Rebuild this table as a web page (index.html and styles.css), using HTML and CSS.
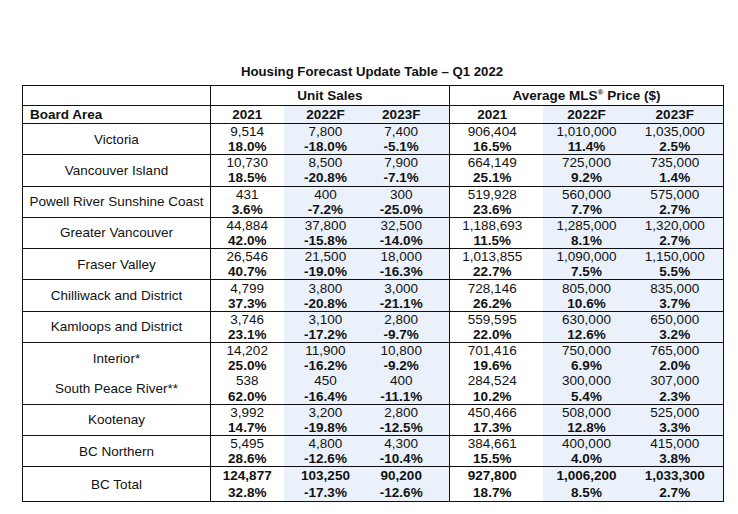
FILE: index.html
```html
<!DOCTYPE html>
<html lang="en">
<head>
<meta charset="utf-8">
<title>Housing Forecast Update Table – Q1 2022</title>
<link rel="stylesheet" href="styles.css">
</head>
<body>
<div class="page">
  <h1 class="title">Housing Forecast Update Table – Q1 2022</h1>
  <table class="forecast">
    <colgroup>
      <col class="c-area"><col class="c-u1"><col class="c-u2"><col class="c-u3"><col class="c-p1"><col class="c-p2"><col class="c-p3">
    </colgroup>
    <thead>
      <tr class="group-row">
        <th class="area-cell"></th>
        <th colspan="3" class="sep">Unit Sales</th>
        <th colspan="3">Average MLS<sup>®</sup> Price ($)</th>
      </tr>
      <tr class="year-row">
        <th class="area-cell area-head">Board Area</th>
        <th class="u1">2021</th>
        <th class="u2 shade">2022F</th>
        <th class="u3 shade sep">2023F</th>
        <th class="p1">2021</th>
        <th class="p2 shade">2022F</th>
        <th class="p3 shade">2023F</th>
      </tr>
    </thead>
    <tbody>
      <tr>
        <td class="area-cell">Victoria</td>
        <td class="u1"><span class="n">9,514</span><b>18.0%</b></td>
        <td class="u2 shade"><span class="n">7,800</span><b>-18.0%</b></td>
        <td class="u3 shade sep"><span class="n">7,400</span><b>-5.1%</b></td>
        <td class="p1"><span class="n">906,404</span><b>16.5%</b></td>
        <td class="p2 shade"><span class="n">1,010,000</span><b>11.4%</b></td>
        <td class="p3 shade"><span class="n">1,035,000</span><b>2.5%</b></td>
      </tr>
      <tr>
        <td class="area-cell">Vancouver Island</td>
        <td class="u1"><span class="n">10,730</span><b>18.5%</b></td>
        <td class="u2 shade"><span class="n">8,500</span><b>-20.8%</b></td>
        <td class="u3 shade sep"><span class="n">7,900</span><b>-7.1%</b></td>
        <td class="p1"><span class="n">664,149</span><b>25.1%</b></td>
        <td class="p2 shade"><span class="n">725,000</span><b>9.2%</b></td>
        <td class="p3 shade"><span class="n">735,000</span><b>1.4%</b></td>
      </tr>
      <tr>
        <td class="area-cell">Powell River Sunshine Coast</td>
        <td class="u1"><span class="n">431</span><b>3.6%</b></td>
        <td class="u2 shade"><span class="n">400</span><b>-7.2%</b></td>
        <td class="u3 shade sep"><span class="n">300</span><b>-25.0%</b></td>
        <td class="p1"><span class="n">519,928</span><b>23.6%</b></td>
        <td class="p2 shade"><span class="n">560,000</span><b>7.7%</b></td>
        <td class="p3 shade"><span class="n">575,000</span><b>2.7%</b></td>
      </tr>
      <tr>
        <td class="area-cell">Greater Vancouver</td>
        <td class="u1"><span class="n">44,884</span><b>42.0%</b></td>
        <td class="u2 shade"><span class="n">37,800</span><b>-15.8%</b></td>
        <td class="u3 shade sep"><span class="n">32,500</span><b>-14.0%</b></td>
        <td class="p1"><span class="n">1,188,693</span><b>11.5%</b></td>
        <td class="p2 shade"><span class="n">1,285,000</span><b>8.1%</b></td>
        <td class="p3 shade"><span class="n">1,320,000</span><b>2.7%</b></td>
      </tr>
      <tr>
        <td class="area-cell">Fraser Valley</td>
        <td class="u1"><span class="n">26,546</span><b>40.7%</b></td>
        <td class="u2 shade"><span class="n">21,500</span><b>-19.0%</b></td>
        <td class="u3 shade sep"><span class="n">18,000</span><b>-16.3%</b></td>
        <td class="p1"><span class="n">1,013,855</span><b>22.7%</b></td>
        <td class="p2 shade"><span class="n">1,090,000</span><b>7.5%</b></td>
        <td class="p3 shade"><span class="n">1,150,000</span><b>5.5%</b></td>
      </tr>
      <tr>
        <td class="area-cell">Chilliwack and District</td>
        <td class="u1"><span class="n">4,799</span><b>37.3%</b></td>
        <td class="u2 shade"><span class="n">3,800</span><b>-20.8%</b></td>
        <td class="u3 shade sep"><span class="n">3,000</span><b>-21.1%</b></td>
        <td class="p1"><span class="n">728,146</span><b>26.2%</b></td>
        <td class="p2 shade"><span class="n">805,000</span><b>10.6%</b></td>
        <td class="p3 shade"><span class="n">835,000</span><b>3.7%</b></td>
      </tr>
      <tr>
        <td class="area-cell">Kamloops and District</td>
        <td class="u1"><span class="n">3,746</span><b>23.1%</b></td>
        <td class="u2 shade"><span class="n">3,100</span><b>-17.2%</b></td>
        <td class="u3 shade sep"><span class="n">2,800</span><b>-9.7%</b></td>
        <td class="p1"><span class="n">559,595</span><b>22.0%</b></td>
        <td class="p2 shade"><span class="n">630,000</span><b>12.6%</b></td>
        <td class="p3 shade"><span class="n">650,000</span><b>3.2%</b></td>
      </tr>
      <tr class="joined">
        <td class="area-cell">Interior*</td>
        <td class="u1"><span class="n">14,202</span><b>25.0%</b></td>
        <td class="u2 shade"><span class="n">11,900</span><b>-16.2%</b></td>
        <td class="u3 shade sep"><span class="n">10,800</span><b>-9.2%</b></td>
        <td class="p1"><span class="n">701,416</span><b>19.6%</b></td>
        <td class="p2 shade"><span class="n">750,000</span><b>6.9%</b></td>
        <td class="p3 shade"><span class="n">765,000</span><b>2.0%</b></td>
      </tr>
      <tr>
        <td class="area-cell">South Peace River**</td>
        <td class="u1"><span class="n">538</span><b>62.0%</b></td>
        <td class="u2 shade"><span class="n">450</span><b>-16.4%</b></td>
        <td class="u3 shade sep"><span class="n">400</span><b>-11.1%</b></td>
        <td class="p1"><span class="n">284,524</span><b>10.2%</b></td>
        <td class="p2 shade"><span class="n">300,000</span><b>5.4%</b></td>
        <td class="p3 shade"><span class="n">307,000</span><b>2.3%</b></td>
      </tr>
      <tr>
        <td class="area-cell">Kootenay</td>
        <td class="u1"><span class="n">3,992</span><b>14.7%</b></td>
        <td class="u2 shade"><span class="n">3,200</span><b>-19.8%</b></td>
        <td class="u3 shade sep"><span class="n">2,800</span><b>-12.5%</b></td>
        <td class="p1"><span class="n">450,466</span><b>17.3%</b></td>
        <td class="p2 shade"><span class="n">508,000</span><b>12.8%</b></td>
        <td class="p3 shade"><span class="n">525,000</span><b>3.3%</b></td>
      </tr>
      <tr>
        <td class="area-cell">BC Northern</td>
        <td class="u1"><span class="n">5,495</span><b>28.6%</b></td>
        <td class="u2 shade"><span class="n">4,800</span><b>-12.6%</b></td>
        <td class="u3 shade sep"><span class="n">4,300</span><b>-10.4%</b></td>
        <td class="p1"><span class="n">384,661</span><b>15.5%</b></td>
        <td class="p2 shade"><span class="n">400,000</span><b>4.0%</b></td>
        <td class="p3 shade"><span class="n">415,000</span><b>3.8%</b></td>
      </tr>
      <tr class="total">
        <td class="area-cell">BC Total</td>
        <td class="u1"><b>124,877</b><b>32.8%</b></td>
        <td class="u2 shade"><b>103,250</b><b>-17.3%</b></td>
        <td class="u3 shade sep"><b>90,200</b><b>-12.6%</b></td>
        <td class="p1"><b>927,800</b><b>18.7%</b></td>
        <td class="p2 shade"><b>1,006,200</b><b>8.5%</b></td>
        <td class="p3 shade"><b>1,033,300</b><b>2.7%</b></td>
      </tr>
    </tbody>
  </table>
</div>
</body>
</html>
```

FILE: styles.css
```css
html, body {
  margin: 0;
  padding: 0;
  background: #ffffff;
}

body {
  font-family: "Liberation Sans", Arial, sans-serif;
  color: #111111;
}

.page {
  width: 700px;
  padding: 64px 0 0 22px;
}

.title {
  margin: 0 0 5px;
  font-size: 13.2px;
  line-height: 16px;
  font-weight: bold;
  text-align: center;
}

.forecast {
  width: 701px;
  border-collapse: collapse;
  table-layout: fixed;
  font-size: 13.5px;
  border: 1px solid #111;
}

.c-area { width: 188px; }
.c-u1 { width: 73px; }
.c-u2 { width: 80px; }
.c-u3 { width: 86px; }
.c-p1 { width: 93px; }
.c-p2 { width: 80px; }
.c-p3 { width: 101px; }

.forecast th,
.forecast td {
  padding: 0;
  text-align: center;
  vertical-align: middle;
  border-bottom: 1px solid #111;
}

.forecast th {
  font-weight: bold;
}

.group-row th {
  height: 19px;
  line-height: 16px;
}

.group-row sup {
  font-size: 8px;
  line-height: 0;
  vertical-align: 5px;
}

.year-row th {
  height: 17px;
  line-height: 15px;
}

.area-cell {
  border-right: 1px solid #111;
}

.area-head {
  text-align: left !important;
  padding-left: 7px !important;
}

.sep {
  border-right: 1px solid #111;
}

.shade {
  background: #eaf1fb;
}

.u2 { padding-left: 4px !important; }
.u3 { padding-right: 10px !important; }
.p1 { padding-right: 8px !important; }
.p2 { padding-left: 8px !important; }
.p3 { padding-left: 4px !important; }

.forecast td {
  height: 30.3px;
  line-height: 15.1px;
}

.forecast td .n,
.forecast td b {
  display: block;
}

.forecast td b {
  font-weight: bold;
}

.forecast td.area-cell {
  padding: 0 3px;
}

.joined td {
  border-bottom: none;
}

.total td {
  height: 34px;
  line-height: 17px;
}
```
